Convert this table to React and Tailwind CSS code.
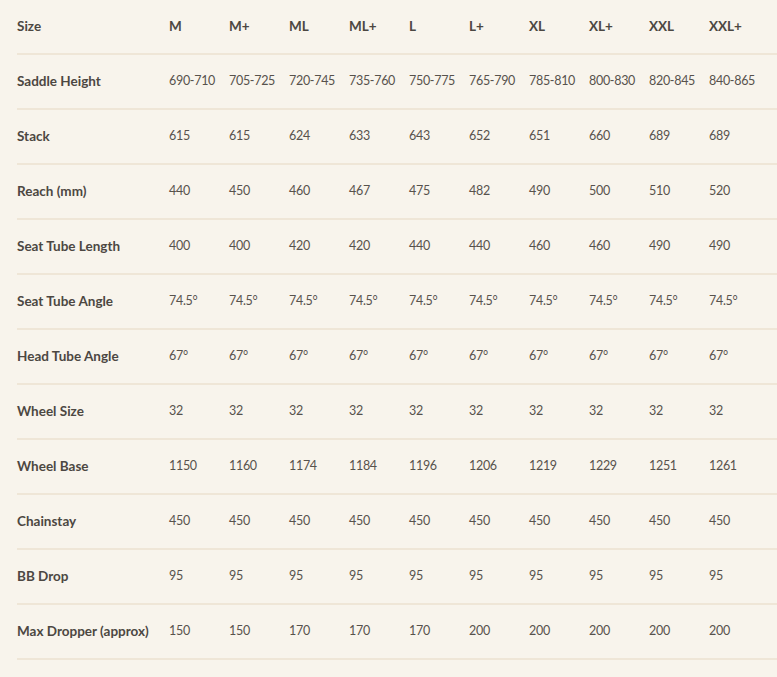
import React from "react";

const sizes = ["M", "M+", "ML", "ML+", "L", "L+", "XL", "XL+", "XXL", "XXL+"];
const rows = [
  ["Saddle Height", ["690-710", "705-725", "720-745", "735-760", "750-775", "765-790", "785-810", "800-830", "820-845", "840-865"]],
  ["Stack", ["615", "615", "624", "633", "643", "652", "651", "660", "689", "689"]],
  ["Reach (mm)", ["440", "450", "460", "467", "475", "482", "490", "500", "510", "520"]],
  ["Seat Tube Length", ["400", "400", "420", "420", "440", "440", "460", "460", "490", "490"]],
  ["Seat Tube Angle", Array(10).fill("74.5°")],
  ["Head Tube Angle", Array(10).fill("67°")],
  ["Wheel Size", Array(10).fill("32")],
  ["Wheel Base", ["1150", "1160", "1174", "1184", "1196", "1206", "1219", "1229", "1251", "1261"]],
  ["Chainstay", Array(10).fill("450")],
  ["BB Drop", Array(10).fill("95")],
  ["Max Dropper (approx)", ["150", "150", "170", "170", "170", "200", "200", "200", "200", "200"]],
];

export default function App() {
  return (
    <div className="w-[777px] h-[677px] overflow-hidden bg-[#f8f4ec] text-[#57524c]" style={{ fontFamily: "Lato, 'Noto Sans', sans-serif" }}>
      <div className="ml-[17px] w-[800px]">
        <div className="flex h-[55px] items-center border-b-2 border-[#efe6d7] text-[13.5px] font-bold text-[#4c4742]">
          <div className="w-[152px] shrink-0">Size</div>
          {sizes.map((s) => (
            <div key={s} className="w-[60px] shrink-0">{s}</div>
          ))}
        </div>
        {rows.map(([label, vals]) => (
          <div key={label} className="flex h-[55px] items-center border-b-2 border-[#efe6d7]">
            <div className="w-[152px] shrink-0 text-[13.5px] font-bold text-[#4c4742]">{label}</div>
            {vals.map((v, i) => (
              <div key={i} className="w-[60px] shrink-0 whitespace-nowrap text-[12.5px] tracking-[-0.3px]">{v}</div>
            ))}
          </div>
        ))}
      </div>
    </div>
  );
}
